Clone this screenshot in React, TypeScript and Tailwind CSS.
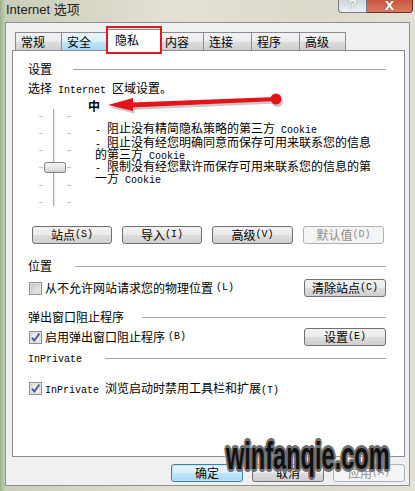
import type { ReactNode } from "react";

// ascii runs get the narrow mono face, like SimSun's half-width latin
function M({ t }: { t: string }) {
  const parts = t.split(/([\x20-\x7e]+)/);
  return (
    <>
      {parts.map((p, i) =>
        /^[\x20-\x7e]+$/.test(p) ? (
          <span key={i} className="font-['Liberation_Mono',monospace] text-[10px] whitespace-pre">
            {p}
          </span>
        ) : (
          <span key={i}>{p}</span>
        )
      )}
    </>
  );
}

function Btn({
  label,
  w = "w-[80px]",
  disabled,
  primary,
}: {
  label: string;
  w?: string;
  disabled?: boolean;
  primary?: boolean;
}) {
  let cls =
    "border-[#707070] bg-[linear-gradient(#f2f2f2_0%,#ebebeb_48%,#dddddd_52%,#cfcfcf_100%)] text-black";
  if (disabled) cls = "border-[#adb2b5] bg-[#f4f4f4] text-[#8d8d8d]";
  if (primary)
    cls =
      "border-[#3c7fb1] bg-[linear-gradient(#eaf6fd_0%,#d9f0fc_48%,#bee6fd_52%,#a7d9f5_100%)] text-black shadow-[inset_0_0_0_1px_#bfe3f7]";
  return (
    <div
      className={`${w} h-[18px] rounded-[3px] border flex items-center justify-center leading-[12px] whitespace-nowrap ${cls}`}
    >
      <M t={label} />
    </div>
  );
}

function Header({ label, gap }: { label: ReactNode; gap: string }) {
  return (
    <div className="flex items-center h-[12px] leading-[12px]">
      <span className="whitespace-nowrap">{label}</span>
      <div className={`h-px flex-1 bg-[#a5a5a5] ${gap}`} />
    </div>
  );
}

function Check({ checked }: { checked?: boolean }) {
  return (
    <svg width="13" height="13" viewBox="0 0 13 13" className="shrink-0">
      <defs>
        <linearGradient id={checked ? "cbon" : "cboff"} x1="0" y1="0" x2="1" y2="1">
          <stop offset="0" stopColor={checked ? "#e6e6e6" : "#c9c9c9"} />
          <stop offset="1" stopColor={checked ? "#ffffff" : "#ececec"} />
        </linearGradient>
      </defs>
      <rect x="0.5" y="0.5" width="12" height="12" fill="#f4f4f4" stroke="#8e8f8f" />
      <rect x="2" y="2" width="9" height="9" fill={`url(#${checked ? "cbon" : "cboff"})`} stroke="#b8b8b8" strokeWidth="0.6" />
      {checked && (
        <path d="M3 6.6 L5.3 9.6 L10.3 2.6" fill="none" stroke="#4a62a3" strokeWidth="2" strokeLinejoin="round" />
      )}
    </svg>
  );
}

function Slider() {
  const ticks = [8, 25, 42, 59, 77, 94];
  return (
    <svg width="50" height="100" viewBox="0 0 50 100" className="shrink-0">
      <defs>
        <linearGradient id="thumb" x1="0" y1="0" x2="0" y2="1">
          <stop offset="0" stopColor="#f4f4f4" />
          <stop offset="0.5" stopColor="#e6e6e6" />
          <stop offset="1" stopColor="#cfcfcf" />
        </linearGradient>
      </defs>
      <rect x="25" y="1" width="1" height="97" fill="#a9a9a9" />
      <rect x="26" y="1" width="1" height="97" fill="#e8e8e8" />
      {ticks.map((y) => (
        <g key={y}>
          <rect x="11" y={y} width="4" height="1" fill="#c4c4c4" />
          <rect x="39" y={y} width="4" height="1" fill="#c4c4c4" />
        </g>
      ))}
      <rect x="16.5" y="54.5" width="21" height="10" rx="2" fill="url(#thumb)" stroke="#7d7d7d" />
    </svg>
  );
}

function Tab({
  label,
  w,
  hover,
  selected,
}: {
  label: string;
  w: string;
  hover?: boolean;
  selected?: boolean;
}) {
  if (selected)
    return (
      <div className={`relative z-10 -mb-px -mx-[2px] ${w} h-[22px] bg-white border border-b-0 border-[#898c95] pl-[8px] pt-[4px] leading-[12px]`}>
        {label}
        <div className="absolute -left-[1px] -right-[1px] -top-[4px] -bottom-[3px] border-2 border-[#dd1a1f]" />
      </div>
    );
  return (
    <div
      className={`${w} h-[18px] border border-b-0 border-[#898c95] -ml-px first:ml-0 pl-[5px] pt-[3px] leading-[12px] ${
        hover
          ? "bg-[linear-gradient(#eaf6fd,#d9f0fc_50%,#bee6fd_51%,#a7d9f5)]"
          : "bg-[linear-gradient(#f2f2f2,#ebebeb_50%,#dddddd_51%,#cfcfcf)]"
      }`}
    >
      {label}
    </div>
  );
}

function Line({ t, cls = "" }: { t: string; cls?: string }) {
  return (
    <div className={`h-[12px] leading-[12px] whitespace-nowrap ${cls}`}>
      <M t={t} />
    </div>
  );
}

export default function App() {
  return (
    <div className="relative w-[415px] h-[491px] overflow-hidden bg-[linear-gradient(90deg,#9db08c_0px,#c9cdb9_5px,#e4e0d3_40%,#ddd9cb_75%,#e3e0d6_100%)] font-['Noto_Sans_CJK_SC',sans-serif] text-[12px] text-black">
      {/* title bar */}
      <div className="flex h-[22px] items-start">
        <div className="mt-[2px] ml-[6px] font-['Liberation_Sans','Noto_Sans_CJK_SC',sans-serif] text-[13px] leading-[16px] text-[#1c1c1c]">
          Internet 选项
        </div>
        <div className="ml-auto mr-[2px] flex">
          <div className="w-[29px] h-[13px] overflow-hidden rounded-bl-[4px] border border-t-0 border-[#6e7a88] bg-[linear-gradient(#cfd6de,#eef1f5)] flex justify-center">
            <span className="-mt-[7px] font-['Liberation_Sans',sans-serif] text-[15px] font-bold text-[#f8f8f8] [text-shadow:0_0_1px_#44505e]">?</span>
          </div>
          <div className="w-[46px] h-[13px] overflow-hidden rounded-br-[4px] border border-t-0 border-l-0 border-[#6b2a1f] bg-[linear-gradient(#c9563f,#d77c63)] flex justify-center">
            <span className="-mt-[8px] font-['Liberation_Sans',sans-serif] text-[17px] font-bold text-white [text-shadow:0_0_1px_#5a1a10]">x</span>
          </div>
        </div>
      </div>

      {/* dialog body */}
      <div className="ml-[5px] w-[405px] h-[464px] border border-[#8d9197] bg-[#f0f0f0]">
        <div className="flex items-end pl-[9px] pt-[9px] h-[27px]">
          <Tab label="常规" w="w-[47px]" />
          <Tab label="安全" w="w-[47px]" hover />
          <Tab label="隐私" w="w-[56px]" selected />
          <Tab label="内容" w="w-[45px]" />
          <Tab label="连接" w="w-[49px]" />
          <Tab label="程序" w="w-[49px]" />
          <Tab label="高级" w="w-[47px]" />
        </div>

        <div className="ml-[6px] w-[393px] h-[407px] border border-[#898c95] bg-white pl-[15px] pr-[18px] pt-[12px]">
          <Header label="设置" gap="ml-[21px]" />
          <Line t="选择 Internet 区域设置。" cls="mt-[7px]" />
          <div className="mt-[6px] pl-[60px] leading-[12px] h-[12px] font-bold">中</div>
          <div className="-mt-[4px] flex">
            <Slider />
            <div className="ml-[17px] mt-[14px]">
              <Line t="- 阻止没有精简隐私策略的第三方 Cookie" />
              <Line t="- 阻止没有经您明确同意而保存可用来联系您的信息" cls="mt-[2px]" />
              <Line t="的第三方 Cookie" />
              <Line t="- 限制没有经您默许而保存可用来联系您的信息的第" />
              <Line t="一方 Cookie" />
            </div>
          </div>

          <div className="mt-[18px] ml-[4px] flex gap-[10px]">
            <Btn label="站点(S)" />
            <Btn label="导入(I)" />
            <Btn label="高级(V)" w="w-[81px]" />
            <Btn label="默认值(D)" w="w-[81px]" disabled />
          </div>

          <div className="mt-[16px]">
            <Header label="位置" gap="ml-[23px]" />
          </div>
          <div className="mt-[7px] flex items-center h-[18px]">
            <div className="ml-[1px] flex items-center gap-[3px] leading-[12px] whitespace-nowrap">
              <Check />
              <M t="从不允许网站请求您的物理位置(L)" />
            </div>
            <div className="ml-auto">
              <Btn label="清除站点(C)" w="w-[82px]" />
            </div>
          </div>

          <div className="mt-[14px]">
            <Header label="弹出窗口阻止程序" gap="ml-[18px]" />
          </div>
          <div className="mt-[5px] flex items-center h-[18px]">
            <div className="ml-[1px] flex items-center gap-[3px] leading-[12px] whitespace-nowrap">
              <Check checked />
              <M t="启用弹出窗口阻止程序(B)" />
            </div>
            <div className="ml-auto">
              <Btn label="设置(E)" w="w-[82px]" />
            </div>
          </div>

          <div className="mt-[6px]">
            <Header label={<M t="InPrivate" />} gap="ml-[23px]" />
          </div>
          <div className="mt-[18px] ml-[1px] flex items-center gap-[3px] h-[12px] leading-[12px] whitespace-nowrap">
            <Check checked />
            <div className="h-[12px] leading-[12px]">
              <M t="InPrivate 浏览启动时禁用工具栏和扩展(T)" />
            </div>
          </div>
        </div>

        <div className="mt-[7px] flex justify-end gap-[9px] pr-[4px]">
          <Btn label="确定" w="w-[72px]" primary />
          <Btn label="取消" w="w-[72px]" />
          <Btn label="应用(A)" w="w-[72px]" disabled />
        </div>
      </div>

      {/* red annotation arrow */}
      <svg className="absolute left-[100px] top-[88px]" width="190" height="28" viewBox="0 0 190 28">
        <g fill="#8a8a8a" opacity="0.45" transform="translate(1.5 2.5)">
          <polygon points="8,17 33,10 33,23" />
          <polygon points="32,14.5 176,9 176,13 32,19.5" />
          <circle cx="176" cy="11" r="5.5" />
        </g>
        <g fill="#e3141a">
          <polygon points="8,17 33,10 33,23" />
          <polygon points="32,14.5 176,9 176,13 32,19.5" />
          <circle cx="176" cy="11" r="5.5" />
        </g>
      </svg>

      {/* watermark */}
      <div className="absolute left-[226px] top-[437px] origin-left scale-x-[0.62] whitespace-nowrap font-['Liberation_Sans',sans-serif] font-bold text-[38px] leading-none text-[#111111] [text-shadow:3px_0_#707070,-3px_0_#707070,0_3px_#707070,0_-3px_#707070,2px_2px_#707070,-2px_-2px_#707070,2px_-2px_#707070,-2px_2px_#707070,0_0_7px_#ffffff]">
        winfanqie.com
      </div>
    </div>
  );
}
